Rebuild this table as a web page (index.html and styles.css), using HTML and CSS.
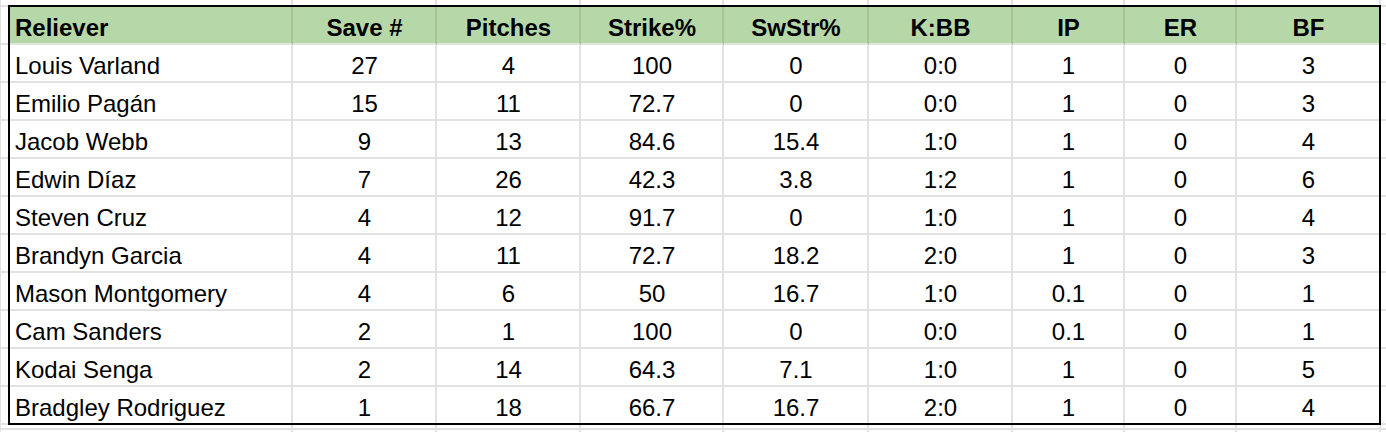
FILE: index.html
```html
<!DOCTYPE html>
<html lang="en">
<head>
<meta charset="utf-8">
<title>Relievers</title>
<link rel="stylesheet" href="styles.css">
</head>
<body>
<div class="sheet">
  <div class="table">
    <div class="row head">
      <div class="cell name">Reliever</div><div class="cell">Save #</div><div class="cell">Pitches</div><div class="cell">Strike%</div><div class="cell">SwStr%</div><div class="cell">K:BB</div><div class="cell">IP</div><div class="cell">ER</div><div class="cell">BF</div>
    </div>
    <div class="row">
      <div class="cell name">Louis Varland</div><div class="cell">27</div><div class="cell">4</div><div class="cell">100</div><div class="cell">0</div><div class="cell">0:0</div><div class="cell">1</div><div class="cell">0</div><div class="cell">3</div>
    </div>
    <div class="row">
      <div class="cell name">Emilio Pagán</div><div class="cell">15</div><div class="cell">11</div><div class="cell">72.7</div><div class="cell">0</div><div class="cell">0:0</div><div class="cell">1</div><div class="cell">0</div><div class="cell">3</div>
    </div>
    <div class="row">
      <div class="cell name">Jacob Webb</div><div class="cell">9</div><div class="cell">13</div><div class="cell">84.6</div><div class="cell">15.4</div><div class="cell">1:0</div><div class="cell">1</div><div class="cell">0</div><div class="cell">4</div>
    </div>
    <div class="row">
      <div class="cell name">Edwin Díaz</div><div class="cell">7</div><div class="cell">26</div><div class="cell">42.3</div><div class="cell">3.8</div><div class="cell">1:2</div><div class="cell">1</div><div class="cell">0</div><div class="cell">6</div>
    </div>
    <div class="row">
      <div class="cell name">Steven Cruz</div><div class="cell">4</div><div class="cell">12</div><div class="cell">91.7</div><div class="cell">0</div><div class="cell">1:0</div><div class="cell">1</div><div class="cell">0</div><div class="cell">4</div>
    </div>
    <div class="row">
      <div class="cell name">Brandyn Garcia</div><div class="cell">4</div><div class="cell">11</div><div class="cell">72.7</div><div class="cell">18.2</div><div class="cell">2:0</div><div class="cell">1</div><div class="cell">0</div><div class="cell">3</div>
    </div>
    <div class="row">
      <div class="cell name">Mason Montgomery</div><div class="cell">4</div><div class="cell">6</div><div class="cell">50</div><div class="cell">16.7</div><div class="cell">1:0</div><div class="cell">0.1</div><div class="cell">0</div><div class="cell">1</div>
    </div>
    <div class="row">
      <div class="cell name">Cam Sanders</div><div class="cell">2</div><div class="cell">1</div><div class="cell">100</div><div class="cell">0</div><div class="cell">0:0</div><div class="cell">0.1</div><div class="cell">0</div><div class="cell">1</div>
    </div>
    <div class="row">
      <div class="cell name">Kodai Senga</div><div class="cell">2</div><div class="cell">14</div><div class="cell">64.3</div><div class="cell">7.1</div><div class="cell">1:0</div><div class="cell">1</div><div class="cell">0</div><div class="cell">5</div>
    </div>
    <div class="row">
      <div class="cell name">Bradgley Rodriguez</div><div class="cell">1</div><div class="cell">18</div><div class="cell">66.7</div><div class="cell">16.7</div><div class="cell">2:0</div><div class="cell">1</div><div class="cell">0</div><div class="cell">4</div>
    </div>
  </div>
</div>
</body>
</html>
```

FILE: styles.css
```css
html, body {
  margin: 0;
  padding: 0;
  background: #fff;
}

body {
  width: 1386px;
  height: 432px;
  overflow: hidden;
  font-family: "Liberation Sans", Arial, sans-serif;
  color: #000;
}

.sheet {
  box-sizing: border-box;
  width: 1386px;
  height: 432px;
  padding: 5px 0 0 8px;
  background-color: #fff;
  background-image:
    linear-gradient(to right,
      #e2e2e2 0 1px, transparent 1px 291px,
      #e2e2e2 291px 293px, transparent 293px 435px,
      #e2e2e2 435px 437px, transparent 437px 579px,
      #e2e2e2 579px 581px, transparent 581px 722px,
      #e2e2e2 722px 724px, transparent 724px 867px,
      #e2e2e2 867px 869px, transparent 869px 1011px,
      #e2e2e2 1011px 1013px, transparent 1013px 1123px,
      #e2e2e2 1123px 1125px, transparent 1125px 1235px,
      #e2e2e2 1235px 1237px, transparent 1237px 1379px,
      #e2e2e2 1379px 1381px, transparent 1381px),
    linear-gradient(to bottom, transparent 0 428px, #e2e2e2 428px 430px, transparent 430px),
    repeating-linear-gradient(to bottom, #e2e2e2 0 2px, transparent 2px 38px);
  background-size: 100% 100%, 100% 100%, 100% 420px;
  background-position: 0 0, 0 0, 0 5px;
  background-repeat: no-repeat;
}

.table {
  display: grid;
  grid-template-columns: 283px 144px 144px 143px 145px 144px 112px 112px 142px;
  width: max-content;
  border: 2px solid #000;
  background: #fff;
}

.row {
  display: contents;
}

.cell {
  box-sizing: border-box;
  height: 38px;
  display: flex;
  align-items: flex-end;
  justify-content: center;
  padding: 0 4px 2px 5px;
  font-size: 24px;
  line-height: 27px;
  white-space: nowrap;
  border-right: 2px solid #e2e2e2;
  border-bottom: 2px solid #e2e2e2;
  background: #fff;
}

.cell.name {
  justify-content: flex-start;
}

.row > .cell:last-child {
  border-right: 0;
}

.row:last-child > .cell {
  border-bottom: 0;
  height: 36px;
}

.head > .cell {
  background: #b6d7a8;
  font-weight: bold;
  border-right-color: #a6c699;
  border-bottom-color: #dfe6dc;
}
```
